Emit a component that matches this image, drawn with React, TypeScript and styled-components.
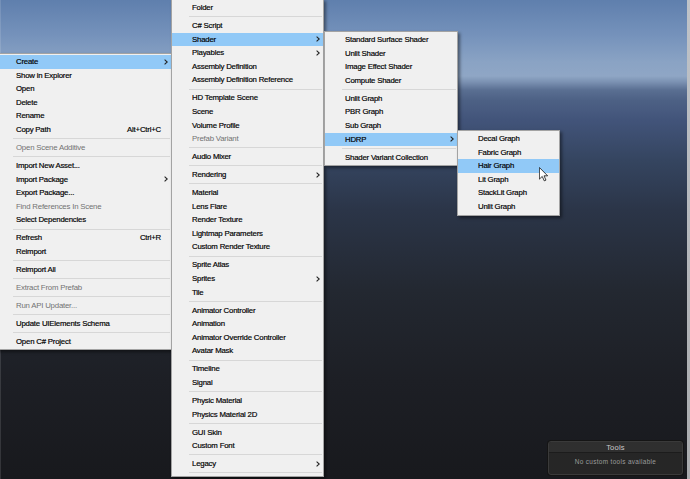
import React from "react"
import styled, { createGlobalStyle } from "styled-components"

const GlobalStyle = createGlobalStyle`
    html, body {
        margin: 0;
        padding: 0;
    }
    body {
        width: 690px;
        height: 479px;
        overflow: hidden;
        background: #18191d;
        font-family: "Liberation Sans", Arial, sans-serif;
    }
`

type Entry =
    | "sep"
    | {
          label: string
          shortcut?: string
          sub?: boolean
          disabled?: boolean
          active?: boolean
      }

const projectMenu: Entry[] = [
    { label: "Create", sub: true, active: true },
    { label: "Show in Explorer" },
    { label: "Open" },
    { label: "Delete" },
    { label: "Rename" },
    { label: "Copy Path", shortcut: "Alt+Ctrl+C" },
    "sep",
    { label: "Open Scene Additive", disabled: true },
    "sep",
    { label: "Import New Asset..." },
    { label: "Import Package", sub: true },
    { label: "Export Package..." },
    { label: "Find References In Scene", disabled: true },
    { label: "Select Dependencies" },
    "sep",
    { label: "Refresh", shortcut: "Ctrl+R" },
    { label: "Reimport" },
    "sep",
    { label: "Reimport All" },
    "sep",
    { label: "Extract From Prefab", disabled: true },
    "sep",
    { label: "Run API Updater...", disabled: true },
    "sep",
    { label: "Update UIElements Schema" },
    "sep",
    { label: "Open C# Project" },
]

const createMenu: Entry[] = [
    { label: "Folder" },
    "sep",
    { label: "C# Script" },
    { label: "Shader", sub: true, active: true },
    { label: "Playables", sub: true },
    { label: "Assembly Definition" },
    { label: "Assembly Definition Reference" },
    "sep",
    { label: "HD Template Scene" },
    { label: "Scene" },
    { label: "Volume Profile" },
    { label: "Prefab Variant", disabled: true },
    "sep",
    { label: "Audio Mixer" },
    "sep",
    { label: "Rendering", sub: true },
    "sep",
    { label: "Material" },
    { label: "Lens Flare" },
    { label: "Render Texture" },
    { label: "Lightmap Parameters" },
    { label: "Custom Render Texture" },
    "sep",
    { label: "Sprite Atlas" },
    { label: "Sprites", sub: true },
    { label: "Tile" },
    "sep",
    { label: "Animator Controller" },
    { label: "Animation" },
    { label: "Animator Override Controller" },
    { label: "Avatar Mask" },
    "sep",
    { label: "Timeline" },
    { label: "Signal" },
    "sep",
    { label: "Physic Material" },
    { label: "Physics Material 2D" },
    "sep",
    { label: "GUI Skin" },
    { label: "Custom Font" },
    "sep",
    { label: "Legacy", sub: true },
    "sep",
]

const shaderMenu: Entry[] = [
    { label: "Standard Surface Shader" },
    { label: "Unlit Shader" },
    { label: "Image Effect Shader" },
    { label: "Compute Shader" },
    "sep",
    { label: "Unlit Graph" },
    { label: "PBR Graph" },
    { label: "Sub Graph" },
    { label: "HDRP", sub: true, active: true },
    "sep",
    { label: "Shader Variant Collection" },
]

const hdrpMenu: Entry[] = [
    { label: "Decal Graph" },
    { label: "Fabric Graph" },
    { label: "Hair Graph", active: true },
    { label: "Lit Graph" },
    { label: "StackLit Graph" },
    { label: "Unlit Graph" },
]

const Window = styled.div`
    position: relative;
    display: flex;
    width: 690px;
    height: 479px;
    overflow: hidden;
`

const SceneView = styled.div`
    position: relative;
    flex: 1;
    border-left: 1px solid rgba(255, 255, 255, 0.12);
    background: linear-gradient(
        to bottom,
        #5f7fad 0px,
        #7592bb 35px,
        #8aa3c4 62px,
        #8fa6c5 76px,
        #7b91b2 82px,
        #5a6f92 90px,
        #4d6185 100px,
        #42547a 120px,
        #354560 160px,
        #2b3548 210px,
        #232831 290px,
        #1d1f25 380px,
        #18191d 479px
    );
`

const WindowEdge = styled.div`
    width: 3px;
    background: linear-gradient(to bottom, #bfc3c8, #a9abae);
`

const Menu = styled.div<{ $left: number; $top: number; $width: number }>`
    position: absolute;
    left: ${({ $left }) => $left}px;
    top: ${({ $top }) => $top}px;
    width: ${({ $width }) => $width}px;
    display: flex;
    flex-direction: column;
    padding: 1px 0;
    box-sizing: border-box;
    background: #f0f0f0;
    border: 1px solid #a3a3a3;
    box-shadow: 2px 2px 3px rgba(0, 0, 0, 0.45);
`

const Item = styled.div<{ $active?: boolean; $disabled?: boolean }>`
    display: flex;
    align-items: center;
    height: 13.6px;
    padding-left: 20px;
    font-size: 7.8px;
    letter-spacing: -0.2px;
    line-height: 13.6px;
    white-space: nowrap;
    color: ${({ $disabled }) => ($disabled ? "#727272" : "#000")};
    background: ${({ $active }) => ($active ? "#91c9f7" : "transparent")};
    -webkit-text-stroke: ${({ $disabled }) => ($disabled ? "0" : "0.18px #000")};
`

const Label = styled.span`
    flex: 1;
`

const Shortcut = styled.span`
    margin-left: 12px;
`

const ArrowCell = styled.span`
    display: flex;
    align-items: center;
    justify-content: center;
    width: 10px;
    height: 100%;
`

const Separator = styled.div`
    height: 4.4px;
    display: flex;
    align-items: center;
    padding: 0 1px 0 17px;

    &::after {
        content: "";
        flex: 1;
        height: 1px;
        background: #d7d7d7;
    }
`

const Chevron = () => (
    <svg width="4" height="6" viewBox="0 0 4 6">
        <polyline points="0.6,0.6 3.2,3 0.6,5.4" fill="none" stroke="#222" strokeWidth="1.1" />
    </svg>
)

const PopupMenu = ({ entries, left, top, width }: { entries: Entry[]; left: number; top: number; width: number }) => (
    <Menu $left={left} $top={top} $width={width}>
        {entries.map((e, i) =>
            e === "sep" ? (
                <Separator key={i} />
            ) : (
                <Item key={i} $active={e.active} $disabled={e.disabled}>
                    <Label>{e.label}</Label>
                    {e.shortcut && <Shortcut>{e.shortcut}</Shortcut>}
                    <ArrowCell>{e.sub && <Chevron />}</ArrowCell>
                </Item>
            )
        )}
    </Menu>
)

const ToolsPanel = styled.div`
    position: absolute;
    right: 4px;
    bottom: 4px;
    width: 135px;
    height: 34px;
    display: flex;
    flex-direction: column;
    box-sizing: border-box;
    background: #262626;
    border: 1px solid #3a3a3a;
    border-radius: 3px;
    box-shadow: 0 0 0 1px #151515;
`

const ToolsHeader = styled.div`
    height: 10px;
    display: flex;
    align-items: center;
    justify-content: center;
    background: #2f2f2f;
    border-bottom: 1px solid #1c1c1c;
    border-radius: 2px 2px 0 0;
    color: #c9c9c9;
    font-size: 7.6px;
    letter-spacing: 0.2px;
`

const ToolsBody = styled.div`
    flex: 1;
    display: flex;
    justify-content: center;
    padding-top: 5px;
    color: #9c9c9c;
    font-size: 6.4px;
    letter-spacing: 0.35px;
`

const Cursor = styled.svg`
    position: absolute;
    left: 539px;
    top: 167px;
`

export default function App() {
    return (
        <>
            <GlobalStyle />
            <Window>
                <SceneView>
                    <ToolsPanel>
                        <ToolsHeader>Tools</ToolsHeader>
                        <ToolsBody>No custom tools available</ToolsBody>
                    </ToolsPanel>
                </SceneView>
                <WindowEdge />
                <PopupMenu entries={projectMenu} left={-5} top={53} width={177} />
                <PopupMenu entries={createMenu} left={171} top={-1} width={153} />
                <PopupMenu entries={shaderMenu} left={324} top={31} width={134} />
                <PopupMenu entries={hdrpMenu} left={457} top={130} width={103} />
                <Cursor width="9" height="14.5" viewBox="0 0 12 19">
                    <path d="M0.5 0.5 L0.5 16 L4.3 12.4 L7 18.3 L9.3 17.3 L6.7 11.6 L11.5 11.6 Z" fill="#fff" stroke="#000" strokeWidth="1" strokeLinejoin="miter" />
                </Cursor>
            </Window>
        </>
    )
}
